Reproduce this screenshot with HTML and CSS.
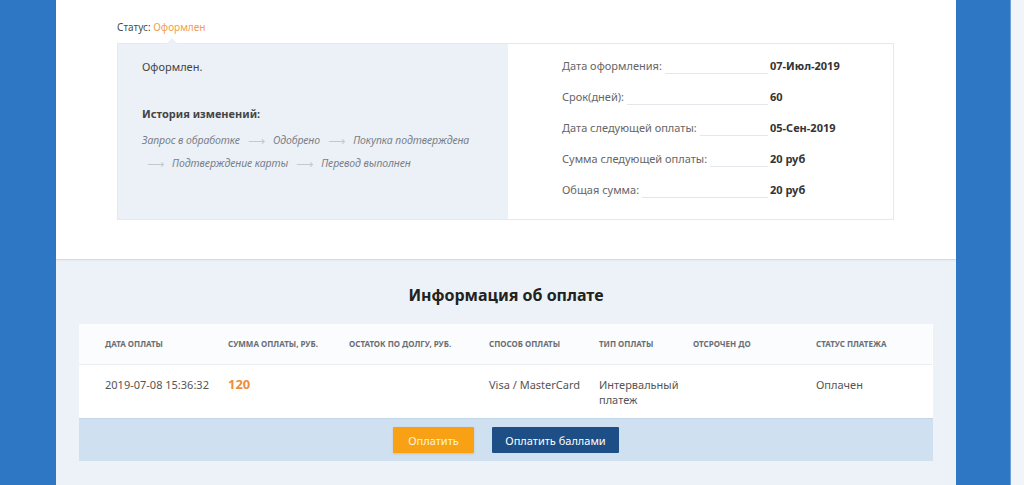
FILE: index.html
```html
<!DOCTYPE html>
<html lang="ru">
<head>
<meta charset="utf-8">
<title>Информация о заказе</title>
<link rel="stylesheet" href="styles.css">
</head>
<body>
<div class="page">
<main class="card">
  <section class="order">
    <div class="status">Статус: <span class="status-value">Оформлен</span></div>
    <div class="info-box">
      <div class="info-left">
        <p class="state">Оформлен.</p>
        <h3 class="history-title">История изменений:</h3>
        <div class="history">
          <div class="history-line">
            <span class="step">Запрос в обработке</span>
            <span class="arrow">⟶</span>
            <span class="step">Одобрено</span>
            <span class="arrow">⟶</span>
            <span class="step">Покупка подтверждена</span>
          </div>
          <div class="history-line second">
            <span class="arrow">⟶</span>
            <span class="step">Подтверждение карты</span>
            <span class="arrow">⟶</span>
            <span class="step">Перевод выполнен</span>
          </div>
        </div>
      </div>
      <div class="info-right">
        <div class="row"><span class="label">Дата оформления:</span><span class="fill"></span><span class="value">07-Июл-2019</span></div>
        <div class="row"><span class="label">Срок(дней):</span><span class="fill"></span><span class="value">60</span></div>
        <div class="row"><span class="label">Дата следующей оплаты:</span><span class="fill"></span><span class="value">05-Сен-2019</span></div>
        <div class="row"><span class="label">Сумма следующей оплаты:</span><span class="fill"></span><span class="value">20 руб</span></div>
        <div class="row"><span class="label">Общая сумма:</span><span class="fill"></span><span class="value">20 руб</span></div>
      </div>
    </div>
  </section>
  <section class="payments">
    <h2 class="payments-title">Информация об оплате</h2>
    <div class="table-wrap">
      <table class="pay-table">
        <colgroup>
          <col class="c1"><col class="c2"><col class="c3"><col class="c4"><col class="c5"><col class="c6"><col class="c7">
        </colgroup>
        <thead>
          <tr>
            <th>Дата оплаты</th>
            <th>Сумма оплаты, руб.</th>
            <th>Остаток по долгу, руб.</th>
            <th>Способ оплаты</th>
            <th>Тип оплаты</th>
            <th>Отсрочен до</th>
            <th>Статус платежа</th>
          </tr>
        </thead>
        <tbody>
          <tr>
            <td>2019-07-08 15:36:32</td>
            <td class="amount">120</td>
            <td></td>
            <td>Visa / MasterCard</td>
            <td>Интервальный платеж</td>
            <td></td>
            <td>Оплачен</td>
          </tr>
        </tbody>
      </table>
      <div class="actions">
        <button class="btn btn-orange" type="button">Оплатить</button>
        <button class="btn btn-blue" type="button">Оплатить баллами</button>
      </div>
    </div>
  </section>
</main>
</div>
</body>
</html>
```

FILE: styles.css
```css
* { box-sizing: border-box; }

html, body {
  margin: 0;
  height: 485px;
  overflow: hidden;
}

html { background: #f1f4f8; }

body {
  width: 1024px;
  background: #f1f4f8;
  font-family: "Noto Sans", "DejaVu Sans", sans-serif;
  color: #444;
}

.page {
  width: 1011px;
  height: 485px;
  padding: 0 54px 0 56px;
  background: #2e77c5;
  border-right: 1px solid #6a9fd8;
}

.card {
  width: 900px;
  height: 485px;
  display: flex;
  flex-direction: column;
  background: #edf2f8;
}

.order {
  background: #fff;
  height: 260px;
  flex: none;
  padding: 20px 62px 0 61px;
  border-bottom: 1px solid #d5dbe2;
  box-shadow: 0 1px 2px rgba(0,0,0,0.04);
}

.status {
  font-size: 10px;
  line-height: 14px;
  color: #4a4a4a;
  height: 23px;
}
.status-value { color: #f2a04e; }

.info-box {
  position: relative;
  display: flex;
  height: 177px;
  border: 1px solid #e4e9ef;
}
.info-box::before {
  content: "";
  position: absolute;
  left: 48px;
  top: -6px;
  width: 0;
  height: 0;
  border-left: 6px solid transparent;
  border-right: 6px solid transparent;
  border-bottom: 6px solid #ecf1f8;
}

.info-left {
  width: 390px;
  flex: none;
  background: #ecf1f8;
  padding: 15px 0 0 24px;
}

.state {
  margin: 0;
  font-size: 11px;
  line-height: 16px;
  color: #444;
}

.history-title {
  margin: 31px 0 0;
  font-size: 11px;
  line-height: 16px;
  font-weight: 700;
  color: #444;
}

.history {
  margin-top: 7px;
  font-size: 10.5px;
  line-height: 23px;
  font-style: italic;
  color: #7a7f86;
  letter-spacing: -0.1px;
}
.history-line {
  display: flex;
  align-items: center;
  column-gap: 8px;
  white-space: nowrap;
}
.history-line.second { padding-left: 5px; }
.history .arrow {
  font-style: normal;
  color: #c3c8ce;
  font-size: 12px;
}

.info-right {
  flex: 1;
  padding: 14px 0 0 54px;
}

.row {
  display: flex;
  align-items: baseline;
  width: 300px;
  height: 31px;
  font-size: 11px;
  line-height: 16px;
}
.label { color: #666; }
.fill {
  flex: 1;
  border-bottom: 1px solid #e3e7ec;
  align-self: flex-end;
  margin: 0 2px 15px 3px;
}
.value {
  width: 92px;
  flex: none;
  font-weight: 700;
  color: #333;
}

.payments {
  flex: 1;
  padding: 20px 23px 0 23px;
}

.payments-title {
  margin: 0 0 14px;
  text-align: center;
  font-size: 16px;
  line-height: 30px;
  font-weight: 700;
  color: #222;
}

.table-wrap {
  background: #fff;
}

.pay-table {
  width: 853px;
  table-layout: fixed;
  border-collapse: collapse;
}
.c1 { width: 149px; }
.c2 { width: 121px; }
.c3 { width: 140px; }
.c4 { width: 110px; }
.c5 { width: 94px; }
.c6 { width: 123px; }
.c7 { width: 116px; }

.pay-table th {
  height: 40px;
  padding: 0;
  text-align: left;
  font-size: 8px;
  font-weight: 700;
  text-transform: uppercase;
  color: #6a6e74;
  background: #fbfcfe;
  border-bottom: 1px solid #e9edf2;
  vertical-align: middle;
}
.pay-table td {
  height: 54px;
  padding: 12px 6px 0 0;
  font-size: 11px;
  line-height: 15px;
  color: #555;
  vertical-align: top;
}
.pay-table th:first-child,
.pay-table td:first-child { padding-left: 26px; }

.pay-table td.amount {
  font-size: 13px;
  font-weight: 700;
  color: #ef8d3c;
  line-height: 17px;
  padding-top: 11px;
}

.actions {
  display: flex;
  justify-content: center;
  gap: 18px;
  height: 43px;
  padding-top: 8px;
  background: #cfe0f1;
  border-top: 1px solid #c4d6e9;
}

.btn {
  height: 26px;
  border: none;
  border-radius: 1px;
  font-family: inherit;
  font-size: 11px;
  padding: 0;
  cursor: pointer;
}
.btn-orange {
  width: 81px;
  background: #f9a115;
  color: #fff3dc;
  box-shadow: 0 1px 2px rgba(200,120,0,0.3);
}
.btn-blue {
  width: 127px;
  background: #1d4e86;
  color: #fff;
}
```
